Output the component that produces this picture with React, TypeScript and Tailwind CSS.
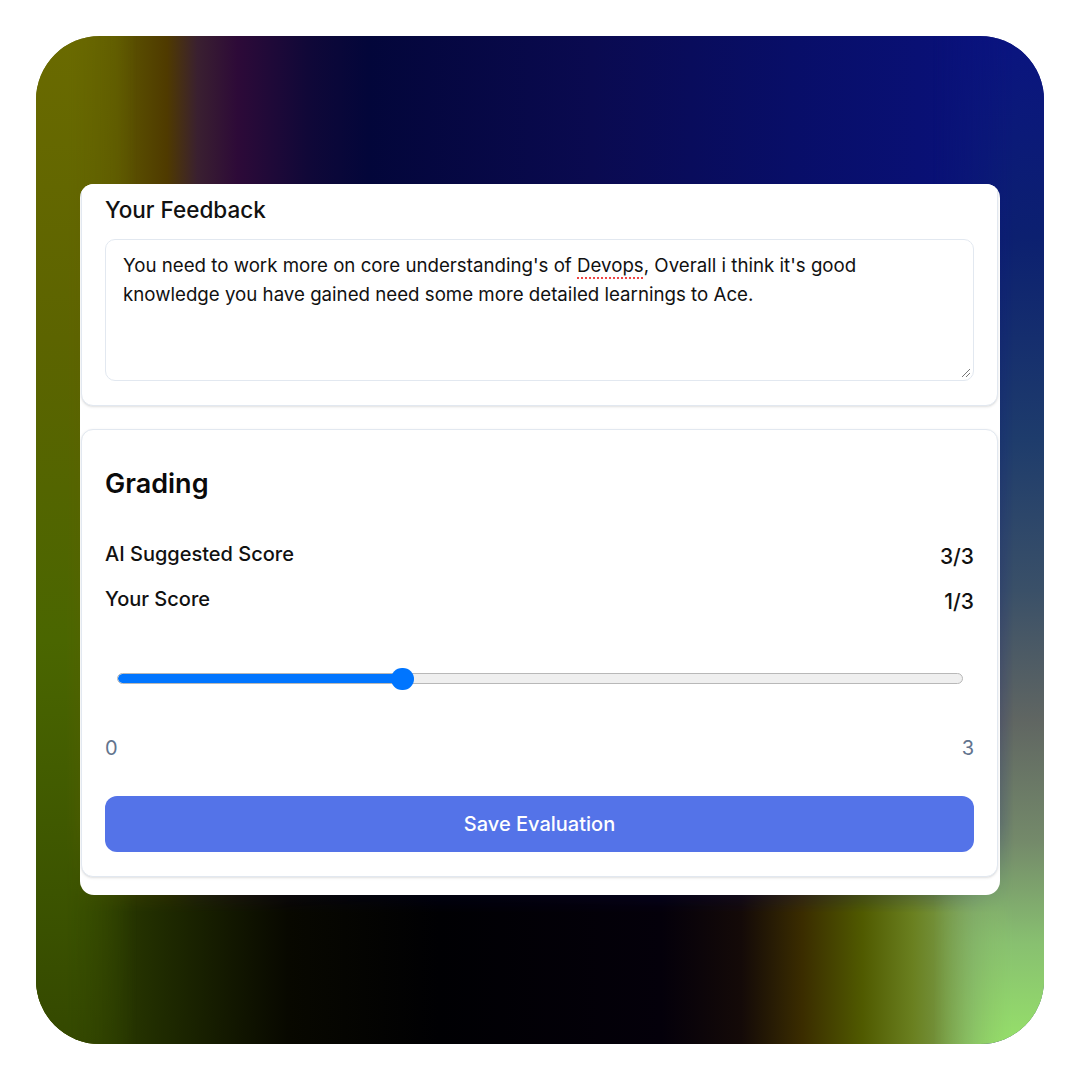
import React from "react";

const value = 1;
const max = 3;

export default function App() {
  const frac = value / max;
  return (
    <div className="w-[1080px] h-[1080px] bg-white p-[36px] font-['Inter','Noto_Sans',sans-serif]">
      <div className="w-[1008px] h-[1008px] rounded-[64px] overflow-hidden grid">
        {/* background layers */}
        <div className="[grid-area:1/1] bg-[linear-gradient(to_right,#6a6a00_0%,#5e5800_8%,#4f3a00_13%,#3a2030_16%,#2d0a38_20%,#100838_27%,#03063a_33%,#0a0a50_55%,#080e68_75%,#0a1280_100%)]" />
        <div className="[grid-area:1/1] bg-[linear-gradient(to_right,#3a5000_0%,#202c00_12%,#080800_25%,#000003_40%,#04000a_62%,#140a08_70%,#3a2c00_76%,#505a00_82%,#6a8020_87%,#80a860_93%,#96e06a_100%)] [mask-image:linear-gradient(to_bottom,transparent_78%,black_87%)]" />
        <div className="[grid-area:1/1] bg-[linear-gradient(to_bottom,#6a6a00_0%,#5c6400_30%,#4a6600_60%,#3c5400_85%,#344800_100%)] [mask-image:linear-gradient(to_right,black_0%,black_3%,transparent_10%)]" />
        <div className="[grid-area:1/1] bg-[linear-gradient(to_bottom,#0a1480_0%,#0c2070_20%,#1e3c6c_40%,#3a5068_55%,#606662_68%,#748a6a_80%,#88c070_90%,#96e06a_100%)] [mask-image:linear-gradient(to_left,black_0%,black_3%,transparent_11%)]" />

        {/* content */}
        <div className="[grid-area:1/1] relative z-10 pt-[148px] pl-[44px]">
          <div className="w-[920px] h-[711px] bg-white rounded-[14px] overflow-hidden pl-px pr-[2px]">
            <div className="-mt-[15px] flex flex-col gap-[23px]">
              {/* Feedback card */}
              <div className="rounded-[12px] border border-slate-200 shadow-sm bg-white px-[23px] pt-6 pb-6">
                <h2 className="text-[22.5px] leading-[32px] font-medium text-[#111111]">Your Feedback</h2>
                <div className="relative mt-[13px] h-[142px] rounded-[10px] border border-slate-200 bg-white px-[17px] pt-[11px] text-[18.7px] leading-[29px] text-[#111111]">
                  <p className="whitespace-nowrap">
                    You need to work more on core understanding's of{" "}
                    <span className="underline decoration-dotted decoration-[#ef4444] decoration-2 underline-offset-[5px]">Devops</span>
                    , Overall i think it's good
                    <br />
                    knowledge you have gained need some more detailed learnings to Ace.
                  </p>
                  <svg className="absolute right-[2px] bottom-[2px]" width="10" height="10" viewBox="0 0 10 10">
                    <line x1="9" y1="1" x2="1" y2="9" stroke="#777" strokeWidth="1" />
                    <line x1="9" y1="5" x2="5" y2="9" stroke="#777" strokeWidth="1" />
                  </svg>
                </div>
              </div>

              {/* Grading card */}
              <div className="rounded-[12px] border border-slate-200 shadow-sm bg-white px-[23px] pt-[36px] pb-6">
                <h2 className="text-[27px] leading-[36px] font-semibold text-[#0a0a0a]">Grading</h2>
                <div className="mt-[38px] flex justify-between items-start">
                  <span className="text-[20px] leading-[28px] font-medium text-[#111111]">AI Suggested Score</span>
                  <span className="mt-[3px] text-[21px] leading-[28px] font-medium text-[#111111]">3/3</span>
                </div>
                <div className="mt-[14px] flex justify-between items-start">
                  <span className="text-[20px] leading-[28px] font-medium text-[#111111]">Your Score</span>
                  <span className="mt-[3px] text-[21px] leading-[28px] font-medium text-[#111111]">1/3</span>
                </div>

                {/* slider */}
                <div className="mt-[51px] ml-[12px] mr-[11px] h-[23px] relative flex items-center">
                  <div className="relative w-full h-[11px] rounded-full bg-[#efefef] border border-[#b8b8b8] overflow-hidden">
                    <div
                      className="absolute left-0 top-0 bottom-0 bg-[#0075ff] rounded-full"
                      style={{ width: `calc(11px + (100% - 22px) * ${frac})` }}
                    />
                  </div>
                  <div
                    className="absolute top-[0.5px] w-[22.5px] h-[22.5px] rounded-full bg-[#0075ff]"
                    style={{ left: `calc((100% - 22.5px) * ${frac})` }}
                  />
                </div>

                <div className="mt-[44px] flex justify-between text-[20px] leading-[28px] text-slate-500">
                  <span>0</span>
                  <span>3</span>
                </div>

                <button className="mt-[34px] w-full h-[56px] rounded-[12px] bg-[#5473e8] text-white text-[20px] font-medium">
                  Save Evaluation
                </button>
              </div>
            </div>
          </div>
        </div>
      </div>
    </div>
  );
}
